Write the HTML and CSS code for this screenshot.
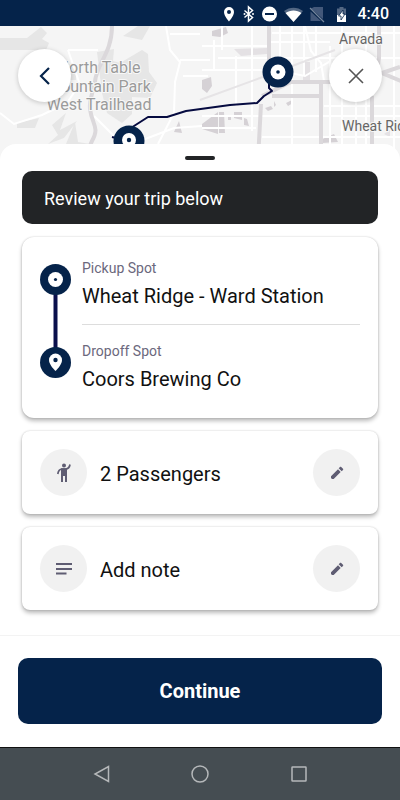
FILE: index.html
```
<!DOCTYPE html>
<html lang="en">
<head>
  <meta charset="UTF-8">
  <meta name="viewport" content="width=device-width, initial-scale=1.0">
  <title>Review your trip</title>
  <link rel="stylesheet" href="styles.css">
</head>
<body>
  <div class="app">
    <header class="status-bar">
      <svg class="status-icons" width="140" height="18" viewBox="0 0 140 18" aria-hidden="true">
        <path fill="#fff" fill-rule="evenodd" d="M19 2a5 5 0 0 0-5 5c0 4 5 9.500 5 9.500S24 11 24 7a5 5 0 0 0-5-5zm0 3a2 2 0 1 1 0 4 2 2 0 0 1 0-4z"/>
        <path fill="none" stroke="#fff" stroke-width="1.500" d="M34.500 5.500l8 7-4 3.500V2l4 3.500-8 7"/>
        <circle cx="34.500" cy="9" r="1" fill="#fff"/><circle cx="43" cy="9" r="1" fill="#fff"/>
        <circle cx="59.500" cy="9" r="7.500" fill="#fff"/>
        <path stroke="#05234a" stroke-width="2" d="M55 9h9"/>
        <path fill="#536783" d="M74 6c5.500-4.500 13.500-4.500 19 0l-9.500 11z"/>
        <path fill="#fff" d="M75.500 8c4.500-3.500 11.500-3.500 16 0l-8 9z"/>
        <path fill="#43587a" d="M104 2h9v12L101 3.500zM100.500 6.500L111 16h-10.500z"/>
        <path stroke="#74849b" stroke-width="1.200" d="M100 3l14 14"/>
        <path fill="#536783" d="M127 3.500h2.500V2h4v1.500h2.500V10h-9z"/>
        <path fill="#fff" d="M127 10h9v7h-9z"/>
        <path fill="#fff" stroke="#05234a" stroke-width=".8" d="M133 5l-4.500 6h2.500v4l4-6h-2z"/>
      </svg>
      <time class="clock">4:40</time>
    </header>

    <section class="map" aria-label="Route map">
      <svg class="map-art" viewBox="0 0 400 134" preserveAspectRatio="xMinYMin slice">
        <rect width="1200" height="134" fill="#f5f5f5"/>
        <!-- parks and blocks -->
        <g fill="#e6e6e6">
          <path d="M0 12h27L41 1l6 6-5 6 7 4-3 7H0zM97 26l17-3-1 12 7 2 22-13 6 4 1 18 8 11-7 15-18-1v17l-10 9-15-10-5-20zM66 38l10 1v15H64zM123 10l15-10h12l-8 14zM17 97l22-5-4 10H17zM52 99l14-12-6 17 17-9-13 17-16 6 10-9zM75 96l3 20 12 2H66z"/>
        </g>
        <g fill="#d5d1d5">
          <path d="M212 5l14-4 2 6-8 4-8-1zM202 54l9-3 1 9-5 7-5-4zM202 98l16-12v22l-16-5zM219 86h5l1 21h-6zM228 90h3v4h-3zM234 86h8v8l-8-2zM244 92l3 1 2 7-5-1zM265 82l6-2 2 3-5 2zM274 75l2 4-2 2zM286 77l6-3 1 3-5 3zM174 106l5-11 3 12zM320 114l14-6 4 8-16 1z"/>
        </g>
        <path fill="#e4e1e4" d="M234 23l33-1v6l-26 2zM384 108l6-4v7zM303 36h7v18h-7z"/>
        <!-- streets -->
        <g class="streets">
          <path d="M0 87l14 11 28-9 25-12 10-15M68 24h30M68 24l12 35M166 0l4 24 10 12-5 20-1 31-16 31M170 8h30M180 34h30M183 50h25M94 90l20 20M140 115l34-13 28-2"/>
          <path d="M214 14v30M222 0v24M236 30v50M252 0v105M280 0v32M292 0v134M304 0v50M316 0v46M330 20v114M342 0v134M356 70v64M366 0v134M394 0v134"/>
          <path d="M202 20h66M218 32h182M202 44h60M202 90h198M272 7h128M270 16h60M202 102h54M262 111h138M324 80h76"/>
          <path d="M305 0l6 25 10 12 3 18M280 45l25 5 24-14 10 8"/>
        </g>
        <!-- highways -->
        <g class="highways">
          <path d="M112 0c0 28-16 38-17 56-2 12-6 15-5 27 2 16 10 18 2 32l-8 19"/>
          <path d="M269 0v36M261 78l-3 56M262 70l29-14h48M272 70h49M321 56v78M372 70v64M379 0v32l-2 13 24 10M379 48l21-7"/>
        </g>
        <path d="M200 74l60-22 75-28" fill="none" stroke="#e6e4e6" stroke-width="2"/>
        <g class="map-label park-label">
          <text x="99" y="47">North Table</text>
          <text x="99" y="66">Mountain Park</text>
          <text x="99" y="84">West Trailhead</text>
        </g>
        <g class="map-label">
          <text x="339" y="18">Arvada</text>
          <text x="342" y="105">Wheat Ridge</text>
        </g>
        <!-- route -->
        <path class="route" d="M112 111l4 1 18-12 14-9 19 0 19-6 44-6 27-2 7-7 8-5-3-3V52"/>
        <circle cx="278" cy="46" r="15.500" fill="#05234a"/>
        <circle cx="278" cy="46" r="7.500" fill="#fff"/>
        <circle cx="278" cy="46" r="1.800" fill="#05234a"/>
        <circle cx="129" cy="115" r="15.500" fill="#05234a"/>
        <circle cx="129" cy="114" r="7" fill="#fff"/>
        <circle cx="129" cy="114" r="2.200" fill="#05234a"/>
      </svg>
      <div class="map-controls">
        <button class="round-btn" type="button" aria-label="Back">
          <svg width="24" height="24" viewBox="0 0 24 24"><path d="M16 4l-8 8 8 8" fill="none" stroke="#05234a" stroke-width="2.200"/></svg>
        </button>
        <button class="round-btn" type="button" aria-label="Close">
          <svg width="24" height="24" viewBox="0 0 24 24"><path d="M5 5l14 14M19 5L5 19" fill="none" stroke="#555" stroke-width="1.600"/></svg>
        </button>
      </div>
    </section>

    <main class="sheet">
      <div class="handle"></div>
      <h1 class="banner">Review your trip below</h1>

      <section class="card trip">
        <svg class="trip-line" width="31" height="114" viewBox="0 0 31 114" aria-hidden="true">
          <path d="M15.500 20v74" stroke="#0a0f4c" stroke-width="4"/>
          <circle cx="15.500" cy="15.500" r="15.500" fill="#05234a"/>
          <circle cx="15.500" cy="15.500" r="7.500" fill="#fff"/>
          <circle cx="15.500" cy="15.500" r="1.600" fill="#05234a"/>
          <circle cx="15.500" cy="98.500" r="15.500" fill="#05234a"/>
          <path fill="#fff" d="M15.500 89.500a6.500 6.500 0 0 0-6.500 6.500c0 5 6.500 11 6.500 11s6.500-6 6.500-11a6.500 6.500 0 0 0-6.500-6.500z"/>
          <circle cx="15.500" cy="96" r="2.200" fill="#05234a"/>
        </svg>
        <dl class="stops">
          <div class="stop">
            <dt>Pickup Spot</dt>
            <dd>Wheat Ridge - Ward Station</dd>
          </div>
          <div class="stop">
            <dt>Dropoff Spot</dt>
            <dd>Coors Brewing Co</dd>
          </div>
        </dl>
      </section>

      <section class="card option">
        <span class="option-icon">
          <svg width="24" height="24" viewBox="0 0 24 24" aria-hidden="true">
            <circle cx="12" cy="4.500" r="2" fill="#5f5d73"/>
            <path d="M18 3.500c-.4 2.600-1.500 4.300-4.300 4.500H10c-2.500.2-3.700 1.700-4.200 5" fill="none" stroke="#5f5d73" stroke-width="1.700"/>
            <path fill="#5f5d73" d="M9 7.200h6V21h-2v-6h-2v6H9z"/>
          </svg>
        </span>
        <span class="option-text">2 Passengers</span>
        <button class="edit-btn" type="button" aria-label="Edit passengers">
          <svg width="16" height="16" viewBox="0 0 24 24"><path fill="#5f5d73" d="M3 17v2.500L4.500 21H7L17.500 10.500l-4-4zM21 7.500c.6-.6.600-1.200 0-1.800L18.300 3c-.6-.6-1.200-.6-1.800 0l-2 2 4.500 4.500z"/></svg>
        </button>
      </section>

      <section class="card option">
        <span class="option-icon">
          <svg width="24" height="24" viewBox="0 0 24 24" aria-hidden="true"><path d="M4 7h16M4 12h16M4 16.500h10.500" stroke="#5f5d73" stroke-width="2"/></svg>
        </span>
        <span class="option-text">Add note</span>
        <button class="edit-btn" type="button" aria-label="Edit note">
          <svg width="16" height="16" viewBox="0 0 24 24"><path fill="#5f5d73" d="M3 17v2.500L4.500 21H7L17.500 10.500l-4-4zM21 7.500c.6-.6.600-1.200 0-1.800L18.300 3c-.6-.6-1.200-.6-1.800 0l-2 2 4.500 4.500z"/></svg>
        </button>
      </section>
    </main>

    <footer class="actions">
      <button class="continue-btn" type="button">Continue</button>
    </footer>

    <nav class="system-nav" aria-label="System">
      <button type="button" aria-label="System back">
        <svg width="20" height="20" viewBox="0 0 20 20"><path d="M17.500 2.500v15L4 10z"/></svg>
      </button>
      <button type="button" aria-label="Home">
        <svg width="20" height="20" viewBox="0 0 20 20"><circle cx="10" cy="10" r="8"/></svg>
      </button>
      <button type="button" aria-label="Recent apps">
        <svg width="20" height="20" viewBox="0 0 20 20"><rect x="3" y="3" width="14" height="14" rx=".5"/></svg>
      </button>
    </nav>
  </div>
</body>
</html>
```
FILE: styles.css
```
* { box-sizing: border-box; }
body { margin: 0; font-family: Roboto, "Liberation Sans", sans-serif; color: #111; background: #fff; }
h1, dl, dd { margin: 0; }
button { border: 0; padding: 0; font-family: inherit; cursor: pointer; }
svg { display: block; }

.app { display: flex; flex-direction: column; min-height: 100vh; }

.status-bar { display: flex; align-items: center; justify-content: flex-end; gap: 8px; height: 26px; padding: 2px 11px 0 0; background: #05234a; color: #fff; }
.clock { font-size: 16px; font-weight: 500; line-height: 24px; }

.map { position: relative; height: 134px; overflow: hidden; background: #f5f5f5; }
.map-art { width: 100%; height: 100%; }
.map-label { font-size: 14px; fill: #666; stroke: #f8f8f8; stroke-width: 2px; paint-order: stroke; }
.park-label { font-size: 16px; fill: #9b9b9b; text-anchor: middle; }
.streets { fill: none; stroke: #fff; stroke-width: 2px; }
.highways { fill: none; stroke: #dbd8db; stroke-width: 4px; }
.route { fill: none; stroke: #060b40; stroke-width: 2px; stroke-linejoin: round; }
.map-controls { position: absolute; top: 23px; left: 18px; right: 18px; display: flex; justify-content: space-between; }
.round-btn { display: grid; place-items: center; width: 53px; height: 53px; border-radius: 50%; background: #fff; box-shadow: 0 1px 5px #0003; }

.sheet { position: relative; flex: 1; display: flex; flex-direction: column; gap: 13px; margin-top: -16px; padding: 12px 22px 25px; border-radius: 16px 16px 0 0; background: #fff; }
.handle { align-self: center; width: 30px; height: 4px; border-radius: 2px; background: #222426; }
.banner { margin-top: -2px; padding: 15px 22px 13px; border-radius: 10px; background: #222426; color: #fff; font-size: 18px; font-weight: 400; line-height: 25px; }

.card { border-radius: 8px; background: #fff; box-shadow: 0 0 2px #0003, 0 3px 4px #0004; }
.trip { display: flex; gap: 11px; padding: 27px 18px 28px; border-radius: 12px; }
.trip-line { flex: none; }
.stops { flex: 1; margin-top: -4px; }
.stop { height: 64px; }
.stop + .stop { height: 66px; padding-top: 18px; border-top: 1px solid #ddd; }
.stop dt { color: #6b687d; font-size: 14px; line-height: 16px; }
.stop dd { margin-top: 8px; font-size: 20px; line-height: 24px; }

.option { display: flex; align-items: center; padding: 18px; }
.option-icon, .edit-btn { display: grid; place-items: center; width: 47px; height: 47px; border-radius: 50%; background: #f1f1f1; }
.option-text { flex: 1; padding: 2px 13px 0; font-size: 20px; line-height: 24px; }

.actions { padding: 22px 18px 23px; border-top: 1px solid #f3f3f3; background: #fff; }
.continue-btn { display: block; width: 100%; height: 66px; border-radius: 10px; background: #05234a; color: #fff; font-size: 20px; font-weight: 700; }

.system-nav { display: flex; justify-content: center; gap: 79px; height: 53px; background: #454d52; border-top: 1px solid #111; }
.system-nav button { background: none; }
.system-nav svg { fill: none; stroke: #b5b8ba; stroke-width: 1.5px; }
```
